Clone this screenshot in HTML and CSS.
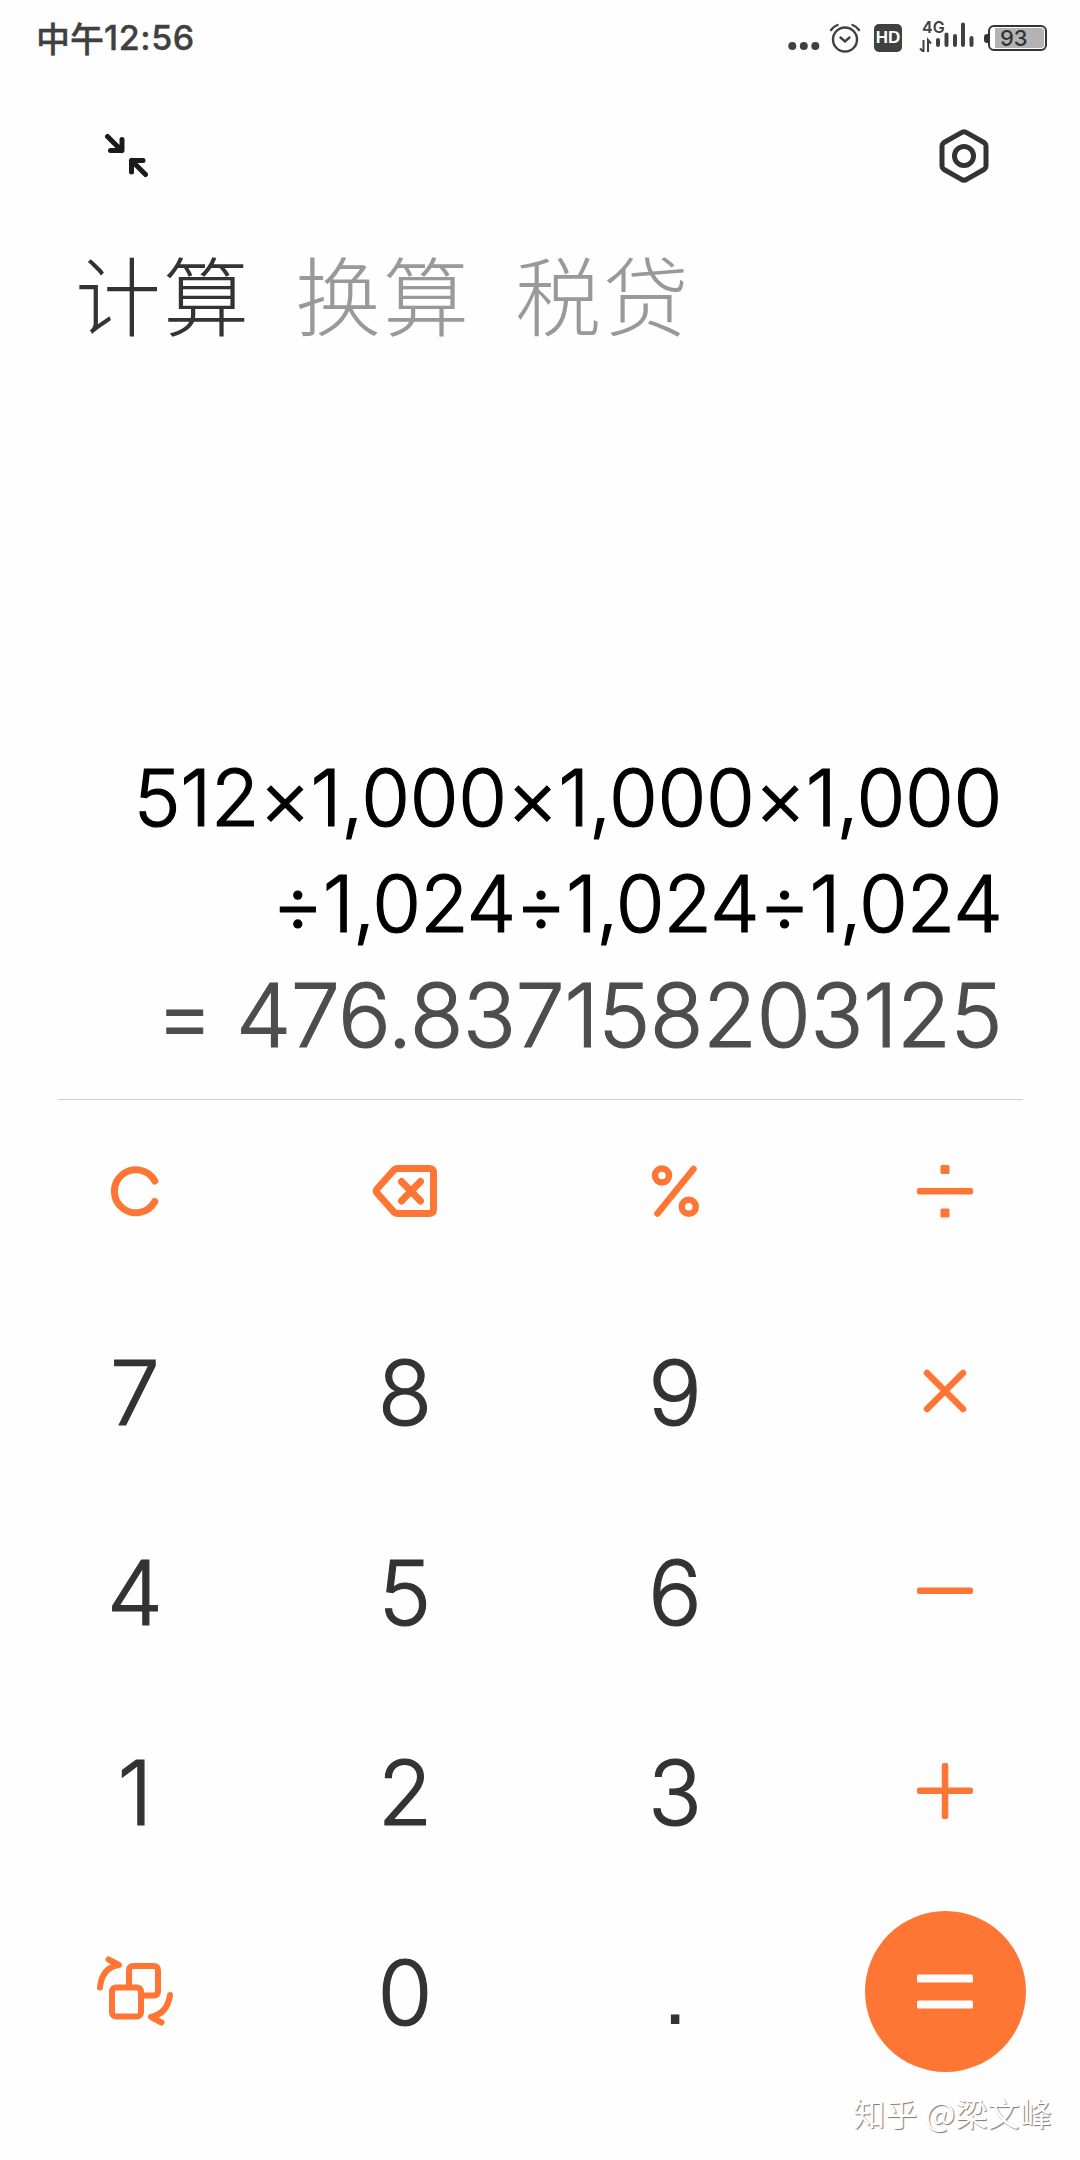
FILE: index.html
```html
<!DOCTYPE html>
<html lang="zh-CN">
<head>
  <meta charset="UTF-8">
  <meta name="viewport" content="width=device-width, initial-scale=1.0">
  <title>计算器</title>
  <link rel="stylesheet" href="styles.css">
</head>
<body>
  <div class="status-bar">
    <div class="time">中午<span class="clock">12:56</span></div>
    <div class="status-icons">
      <svg class="dots" width="32" height="10" viewBox="0 0 32 10" fill="#404040">
        <circle cx="4.3" cy="5" r="4"/><circle cx="15.8" cy="5" r="4"/><circle cx="27.3" cy="5" r="4"/>
      </svg>
      <svg class="alarm" width="32" height="32" viewBox="0 0 32 32" fill="none" stroke="#404040" stroke-width="2.4" stroke-linecap="round">
        <circle cx="16" cy="17.500" r="12"/>
        <path d="M11.500 15.500l4.500 4 4.500-4M2 8q2.500-3.500 6.500-5M30 8q-2.500-3.500-6.500-5"/>
      </svg>
      <div class="hd">HD</div>
      <div class="signal">
        <span class="network">4G</span>
        <svg width="56" height="32" viewBox="0 0 56 32" fill="none" stroke="#404040">
          <path d="M4.500 20v12l-3.500-3.500M9 32V20l3 3.500" stroke-width="2"/>
          <path d="M19 20v5M27.500 14.500v10.500M36 16v9M44 4.500v20.500M52.500 18v7" stroke-width="4" stroke-linecap="round"/>
        </svg>
      </div>
      <div class="battery"><span class="battery-tip"></span><span class="battery-body"><span class="battery-level">93</span></span></div>
    </div>
  </div>

  <div class="toolbar">
    <svg width="44" height="44" viewBox="0 0 44 44" fill="none" stroke="#1a1a1a" stroke-width="5" stroke-linecap="round" stroke-linejoin="round">
      <path d="M3.500 2.500L17.500 16.500M6.500 16.500H18V5.500"/>
      <path d="M41.500 40.500L27.500 26.500M39 26.500H27.500V38"/>
    </svg>
    <svg width="52" height="56" viewBox="0 0 52 56" fill="none" stroke="#333" stroke-width="5" stroke-linejoin="round">
      <path d="M26 3.800Q27.500 3.800 29 4.900L46 14.500Q48 16 48 18V38Q48 40 46 41.500L29 51.100Q26 53.200 23 51.100L6 41.500Q4 40 4 38V18Q4 16 6 14.500L23 4.900Q24.500 3.800 26 3.800Z"/>
      <circle cx="26" cy="28" r="9.500"/>
    </svg>
  </div>

  <div class="tabs">
    <span class="tab active">计算</span>
    <span class="tab">换算</span>
    <span class="tab">税贷</span>
  </div>

  <div class="display">
    <div class="expression">512×1,000×1,000×1,000</div>
    <div class="expression divide">÷1,024÷1,024÷1,024</div>
    <div class="result"><span class="equals">=</span>476.837158203125</div>
  </div>

  <div class="keypad">
    <div class="key">
      <svg width="60" height="60" viewBox="0 0 60 60" fill="none" stroke="#ff7533" stroke-width="7" stroke-linecap="round">
        <path d="M49.800 20A21.500 21.500 0 1 0 49.800 40.500"/>
      </svg>
    </div>
    <div class="key">
      <svg width="66" height="60" viewBox="0 0 66 60" fill="none" stroke="#ff7533" stroke-width="7" stroke-linecap="round" stroke-linejoin="round">
        <path d="M26 7.500H57Q61.500 7.500 61.500 12V48Q61.500 52.500 57 52.500H26Q23 52.500 21 50L5 32Q3.500 30 5 28L21 10Q23 7.500 26 7.500ZM29.500 20.500L48.500 40M48.500 20.500L29.500 40"/>
      </svg>
    </div>
    <div class="key">
      <svg width="60" height="60" viewBox="0 0 60 60" fill="none" stroke="#ff7533" stroke-linecap="round">
        <circle cx="17" cy="14.500" r="7" stroke-width="6.500"/>
        <circle cx="43.800" cy="45.800" r="7" stroke-width="6.500"/>
        <path d="M48.500 8L12.500 52.500" stroke-width="6.500"/>
      </svg>
    </div>
    <div class="key">
      <svg width="60" height="60" viewBox="0 0 60 60" fill="#ff7533">
        <rect x="2" y="27" width="56" height="6.500" rx="2"/>
        <rect x="25.500" y="4" width="9" height="9" rx="1.500"/>
        <rect x="25.500" y="47.500" width="9" height="9" rx="1.500"/>
      </svg>
    </div>

    <div class="key number">7</div>
    <div class="key number">8</div>
    <div class="key number">9</div>
    <div class="key">
      <svg width="60" height="60" viewBox="0 0 60 60" fill="none" stroke="#ff7533" stroke-width="6.500" stroke-linecap="round">
        <path d="M12 12L48 48M48 12L12 48"/>
      </svg>
    </div>

    <div class="key number">4</div>
    <div class="key number">5</div>
    <div class="key number">6</div>
    <div class="key">
      <svg width="60" height="60" viewBox="0 0 60 60" fill="#ff7533">
        <rect x="2" y="26.500" width="56" height="6.500" rx="2"/>
      </svg>
    </div>

    <div class="key number">1</div>
    <div class="key number">2</div>
    <div class="key number">3</div>
    <div class="key">
      <svg width="60" height="60" viewBox="0 0 60 60" fill="#ff7533">
        <rect x="2" y="26.500" width="56" height="6.500" rx="2"/>
        <rect x="26.800" y="2" width="6.500" height="56" rx="2"/>
      </svg>
    </div>

    <div class="key">
      <svg width="80" height="76" viewBox="0 0 80 76" fill="none" stroke="#ff7533" stroke-width="6" stroke-linecap="round" stroke-linejoin="round">
        <path d="M34 31V17.500Q34 13 38.500 13H58.500Q63 13 63 17.500V38Q63 42.500 58.500 42.500H49"/>
        <rect x="17" y="34.500" width="29" height="29" rx="4"/>
        <path d="M5 34.500Q7 14.500 24 12L13.500 6.500"/>
        <path d="M75 42Q72.500 60.500 56 64L66.500 69.500"/>
      </svg>
    </div>
    <div class="key number">0</div>
    <div class="key number point">.</div>
    <div class="key">
      <div class="equal-button">
        <svg width="60" height="60" viewBox="0 0 60 60" fill="#fff">
          <rect x="2" y="13.500" width="56" height="8" rx="1.500"/>
          <rect x="2" y="39.500" width="56" height="8" rx="1.500"/>
        </svg>
      </div>
    </div>
  </div>

  <div class="watermark">知乎 @梁文峰</div>
</body>
</html>
```
FILE: styles.css
```css
body {
  font-family: Inter, "Noto Sans CJK SC", sans-serif;
  background-color: #fefefe;
  color: #333;
  width: 1080px;
  height: 2160px;
  margin: 0;
  overflow: hidden;
  position: relative;
}

svg {
  display: block;
  flex-shrink: 0;
}

.status-bar {
  display: flex;
  justify-content: space-between;
  height: 80px;
  box-sizing: border-box;
  padding: 20px 33px 0 36px;
}

.time {
  display: flex;
  font-family: "Noto Sans CJK SC", sans-serif;
  font-size: 34px;
  line-height: 36px;
  font-weight: 500;
  color: #404040;
  -webkit-text-stroke: 0.4px #404040;
}

.clock {
  font-family: Inter, sans-serif;
  font-size: 34px;
  letter-spacing: 0.6px;
}

.status-icons {
  display: flex;
  align-items: flex-start;
}

.dots {
  margin-top: 21px;
}

.alarm {
  margin: 2px 0 0 9px;
}

.hd {
  width: 28px;
  height: 28px;
  margin: 4px 0 0 13px;
  border-radius: 5px;
  background-color: #404040;
  color: #fff;
  font: bold 17px/28px "Liberation Sans", sans-serif;
  text-align: center;
}

.signal {
  position: relative;
  margin-left: 17px;
}

.network {
  position: absolute;
  left: 3px;
  top: -2px;
  font-size: 16px;
  line-height: 18px;
  font-weight: 600;
  color: #404040;
}

.battery {
  display: flex;
  align-items: center;
  height: 26px;
  margin: 5px 0 0 9px;
}

.battery-tip {
  width: 4px;
  height: 9px;
  border-radius: 3px 0 0 3px;
  background-color: #333;
}

.battery-body {
  width: 59px;
  height: 26px;
  box-sizing: border-box;
  border: 2px solid #333;
  border-radius: 6px;
  padding: 1px 1px 1px 5px;
}

.battery-level {
  display: block;
  height: 20px;
  border-radius: 0 3px 3px 0;
  background-color: #b3b3b3;
  color: #333;
  font-size: 22px;
  font-weight: 500;
  line-height: 20px;
  padding-left: 5px;
}

.toolbar {
  display: flex;
  justify-content: space-between;
  align-items: center;
  height: 152px;
  box-sizing: border-box;
  padding: 0 90px 0 104px;
}

.tabs {
  display: flex;
  gap: 44px;
  height: 130px;
  padding-left: 75px;
}

.tab {
  font-family: "Noto Sans CJK SC", sans-serif;
  font-size: 86px;
  line-height: 122px;
  letter-spacing: 2px;
  font-weight: 300;
  color: #999;
}

.tab.active {
  color: #333;
}

.display {
  height: 738px;
  box-sizing: border-box;
  margin: 0 57px 0 58px;
  padding: 382px 21px 0 0;
  border-bottom: 1px solid #d0d0d0;
  text-align: right;
  white-space: nowrap;
}

.expression {
  font-size: 79px;
  font-weight: 300;
  line-height: 106px;
  letter-spacing: -0.3px;
  color: #000;
  -webkit-text-stroke: 1.2px #000;
}

.expression.divide {
  letter-spacing: -0.9px;
}

.result {
  font-size: 88px;
  font-weight: 300;
  line-height: 119px;
  letter-spacing: -0.6px;
  color: #4d4d4d;
  -webkit-text-stroke: 1.1px #4d4d4d;
}

.equals {
  margin-right: 23px;
}

.keypad {
  display: grid;
  grid-template-columns: repeat(4, 1fr);
  grid-auto-rows: 200px;
  margin-top: -9px;
}

.key {
  display: flex;
  justify-content: center;
  align-items: center;
}

.number {
  box-sizing: border-box;
  padding-top: 3px;
  font-size: 89px;
  font-weight: 300;
  -webkit-text-stroke: 1.2px #333;
}

/* square decimal point */
.point {
  padding-top: 5px;
  font-family: "Liberation Sans", sans-serif;
  -webkit-text-stroke: 0;
}

.equal-button {
  display: flex;
  justify-content: center;
  align-items: center;
  width: 161px;
  height: 161px;
  border-radius: 50%;
  background-color: #ff7533;
}

.watermark {
  position: absolute;
  right: 28px;
  bottom: 28px;
  font-family: "Noto Sans CJK SC", sans-serif;
  font-size: 32px;
  line-height: 40px;
  letter-spacing: 0.2px;
  color: #fff;
  text-shadow: 1px 1px 1px #777;
}
```
